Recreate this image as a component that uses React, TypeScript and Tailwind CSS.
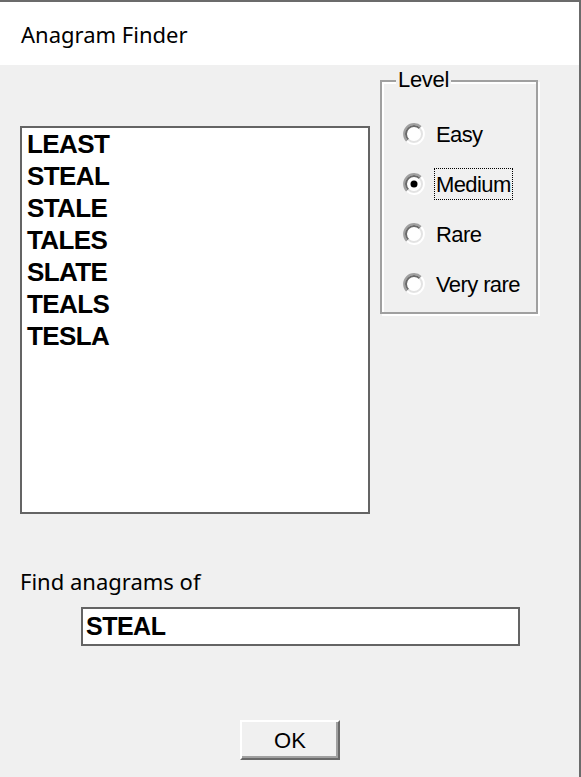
import React, { useState } from 'react';

const words = ['LEAST', 'STEAL', 'STALE', 'TALES', 'SLATE', 'TEALS', 'TESLA'];
const levels = ['Easy', 'Medium', 'Rare', 'Very rare'];

function Radio({ checked }: { checked: boolean }) {
  return (
    <svg width="22" height="22" viewBox="0 0 22 22" className="shrink-0">
      <circle cx="11" cy="11" r="9" fill="#ffffff" />
      <path d="M3.93 18.07 A10 10 0 0 1 18.07 3.93" fill="none" stroke="#a0a0a0" strokeWidth="2" />
      <path d="M5.34 16.66 A8 8 0 0 1 16.66 5.34" fill="none" stroke="#696969" strokeWidth="2" />
      <path d="M18.07 3.93 A10 10 0 0 1 3.93 18.07" fill="none" stroke="#ffffff" strokeWidth="2" />
      <path d="M16.66 5.34 A8 8 0 0 1 5.34 16.66" fill="none" stroke="#e3e3e3" strokeWidth="2" />
      {checked && <circle cx="11" cy="11" r="3.5" fill="#000000" />}
    </svg>
  );
}

export default function App() {
  const [level, setLevel] = useState('Medium');
  const [query, setQuery] = useState('STEAL');

  return (
    <div className="w-[581px] h-[777px] overflow-hidden flex flex-col bg-[#f0f0f0] border-t-2 border-r-2 border-[#6b6b6b] text-black">
      {/* title bar */}
      <div className="h-[63px] shrink-0 bg-white flex items-center pl-[21px]">
        <span className="font-['Noto_Sans',sans-serif] text-[22px] leading-[30px]">Anagram Finder</span>
      </div>

      <div className="flex items-start">
        {/* results list */}
        <div className="ml-[20px] mt-[61px] w-[350px] h-[388px] bg-white border-2 border-[#646464] pl-[5px]">
          {words.map(w => (
            <div
              key={w}
              className="font-['Liberation_Sans',Arial,sans-serif] font-bold text-[26px] leading-[32px] tracking-[-0.6px]"
            >
              {w}
            </div>
          ))}
        </div>

        {/* level group */}
        <div className="relative ml-[10px] mt-[15px] w-[158px] h-[234px] border-2 border-[#a0a0a0] shadow-[2px_2px_0_#ffffff,inset_2px_2px_0_#ffffff] pt-[27px] pl-[21px]">
          <span className="absolute left-[14px] top-[-17px] px-[2px] bg-[#f0f0f0] font-['Liberation_Sans',Arial,sans-serif] text-[22px] leading-[30px] tracking-[-0.3px]">
            Level
          </span>
          <div className="flex flex-col">
            {levels.map(l => (
              <label key={l} className="h-[50px] flex items-center gap-[9px] cursor-default" onClick={() => setLevel(l)}>
                <Radio checked={level === l} />
                <span
                  className={
                    'h-[32px] flex items-center px-[1px] border font-[\'Liberation_Sans\',Arial,sans-serif] text-[22px] tracking-[-0.6px] ' +
                    (level === l ? 'border-dotted border-black' : 'border-transparent')
                  }
                >
                  {l}
                </span>
              </label>
            ))}
          </div>
        </div>
      </div>

      {/* query */}
      <div className="ml-[20px] mt-[52px] font-['Noto_Sans',sans-serif] text-[22px] leading-[30px]">Find anagrams of</div>
      <div className="ml-[81px] mt-[11px] w-[439px] h-[39px] bg-white border-2 border-[#646464] flex items-center pl-[3px]">
        <input
          value={query}
          onChange={e => setQuery(e.target.value)}
          className="w-full bg-transparent outline-none font-['Liberation_Sans',Arial,sans-serif] font-bold text-[25px] tracking-[-0.5px]"
        />
      </div>

      {/* ok */}
      <div className="mt-[74px] ml-[240px]">
        <button className="w-[100px] h-[40px] bg-[#f0f0f0] border-2 border-t-white border-l-white border-b-[#696969] border-r-[#696969] shadow-[inset_-2px_-2px_0_#a0a0a0] flex items-center justify-center font-['Liberation_Sans',Arial,sans-serif] text-[22px]">
          OK
        </button>
      </div>
    </div>
  );
}
